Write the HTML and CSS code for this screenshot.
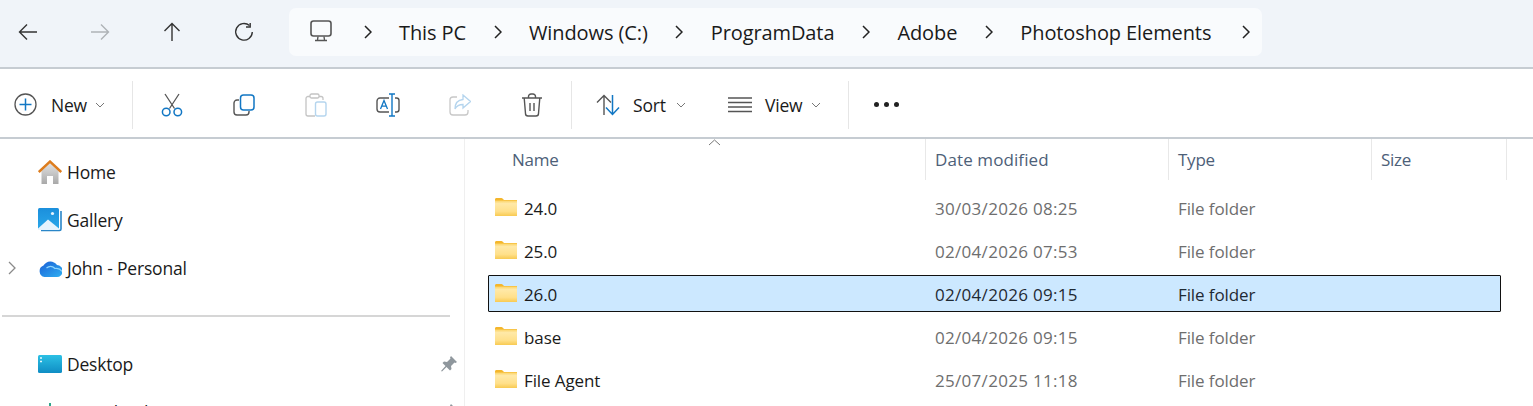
FILE: index.html
```html
<!DOCTYPE html>
<html lang="en">
<head>
    <meta charset="UTF-8">
    <title>Photoshop Elements - File Explorer</title>
    <link rel="stylesheet" href="styles.css">
</head>
<body>
    <svg class="defs" width="0" height="0">
        <defs>
            <linearGradient id="folderFill" x1="0" y1="0" x2="0" y2="1">
                <stop offset="0" stop-color="#fbd365"/>
                <stop offset="0.2" stop-color="#ffe9a8"/>
                <stop offset="0.7" stop-color="#ffe08a"/>
                <stop offset="1" stop-color="#f8ca52"/>
            </linearGradient>
            <linearGradient id="homeBody" x1="0" y1="0" x2="0" y2="1">
                <stop offset="0" stop-color="#e2e2e2"/>
                <stop offset="1" stop-color="#a9a9a9"/>
            </linearGradient>
            <linearGradient id="galleryFill" x1="0" y1="0" x2="0" y2="1">
                <stop offset="0" stop-color="#1b8fdc"/>
                <stop offset="1" stop-color="#2aa8ea"/>
            </linearGradient>
            <linearGradient id="desktopFill" x1="0" y1="0" x2="0" y2="1">
                <stop offset="0" stop-color="#2cc0e4"/>
                <stop offset="1" stop-color="#0f8dc4"/>
            </linearGradient>
            <linearGradient id="cloudFill" x1="0" y1="0" x2="1" y2="1">
                <stop offset="0" stop-color="#1a5fd6"/>
                <stop offset="1" stop-color="#2fb0f2"/>
            </linearGradient>
            <symbol id="folder" viewBox="0 0 22 18">
                <path d="M0 1.5C0 .7.6 0 1.400 0h5c.6 0 1 .2 1.400.7L9 2h13v3H0z" fill="#f4b62c"/>
                <rect y="2.500" width="22" height="15.500" fill="url(#folderFill)"/>
            </symbol>
            <symbol id="chev" viewBox="0 0 8 14">
                <path d="M1 1l6 6-6 6" fill="none" stroke="#222" stroke-width="1.500"/>
            </symbol>
            <symbol id="drop" viewBox="0 0 10 6">
                <path d="M1 1l4 4 4-4" fill="none" stroke="#777" stroke-width="1"/>
            </symbol>
        </defs>
    </svg>

    <!-- address bar -->
    <header class="addressbar">
        <nav class="nav">
            <button class="nav-btn">
                <svg width="20" height="18" viewBox="0 0 20 18"><path d="M19 9H1.500M9 1.500L1.500 9 9 16.500" fill="none" stroke="#333" stroke-width="1.400"/></svg>
            </button>
            <button class="nav-btn">
                <svg width="20" height="18" viewBox="0 0 20 18"><path d="M1 9h17.500M11 1.500L18.500 9 11 16.500" fill="none" stroke="#aeb2b6" stroke-width="1.400"/></svg>
            </button>
            <button class="nav-btn">
                <svg width="18" height="20" viewBox="0 0 18 20"><path d="M9 19V1.500M1.500 9L9 1.500 16.500 9" fill="none" stroke="#333" stroke-width="1.400"/></svg>
            </button>
            <button class="nav-btn">
                <svg width="20" height="20" viewBox="0 0 20 20"><path d="M15.500 3.600A8.300 8.300 0 1 0 18.300 10" fill="none" stroke="#333" stroke-width="1.400"/><path d="M16.200 1v4H12" fill="none" stroke="#333" stroke-width="1.400"/></svg>
            </button>
        </nav>
        <div class="crumbs">
            <svg class="crumb-pc" width="22" height="22" viewBox="0 0 22 22"><rect x="1" y="1" width="20" height="15" rx="2.500" fill="none" stroke="#555" stroke-width="1.600"/><path d="M8 16.500l-.5 3.500M14 16.500l.5 3.500M5 20.500h12" fill="none" stroke="#555" stroke-width="1.400"/></svg>
            <svg class="chev"><use href="#chev"/></svg>
            <span>This PC</span>
            <svg class="chev"><use href="#chev"/></svg>
            <span>Windows (C:)</span>
            <svg class="chev"><use href="#chev"/></svg>
            <span>ProgramData</span>
            <svg class="chev"><use href="#chev"/></svg>
            <span>Adobe</span>
            <svg class="chev"><use href="#chev"/></svg>
            <span>Photoshop Elements</span>
            <svg class="chev chev-last"><use href="#chev"/></svg>
        </div>
    </header>

    <!-- command bar -->
    <div class="toolbar">
        <div class="tool-new">
            <svg width="23" height="23" viewBox="0 0 23 23"><circle cx="11.500" cy="11.500" r="10.500" fill="none" stroke="#555" stroke-width="1.300"/><path d="M11.500 5.500v12M5.500 11.500h12" stroke="#1277c4" stroke-width="1.500"/></svg>
            <span class="tool-label">New</span>
            <svg class="drop"><use href="#drop"/></svg>
        </div>
        <div class="tool-sep"></div>
        <div class="tool-icons">
            <button class="tool-btn">
                <svg width="22" height="24" viewBox="0 0 22 24"><path d="M4 1l9.500 14.500M18 1L8.500 15.500" fill="none" stroke="#555" stroke-width="1.300"/><circle cx="5.200" cy="19" r="3.800" fill="none" stroke="#1277c4" stroke-width="1.500"/><circle cx="16.800" cy="19" r="3.800" fill="none" stroke="#1277c4" stroke-width="1.500"/></svg>
            </button>
            <button class="tool-btn">
                <svg width="22" height="22" viewBox="0 0 22 22"><path d="M6 6H4a3 3 0 0 0-3 3v9a3 3 0 0 0 3 3h9a3 3 0 0 0 3-3v-1" fill="none" stroke="#555" stroke-width="1.400"/><rect x="7.500" y="1" width="13.500" height="15" rx="3" fill="none" stroke="#1277c4" stroke-width="1.500"/></svg>
            </button>
            <button class="tool-btn">
                <svg width="22" height="24" viewBox="0 0 22 24"><path d="M5 3.500H3a2 2 0 0 0-2 2V21a2 2 0 0 0 2 2h7M14 3.500h2a2 2 0 0 1 2 2V7" fill="none" stroke="#c4c4c4" stroke-width="1.300"/><rect x="5" y="1" width="9" height="4" rx="1.500" fill="none" stroke="#c4c4c4" stroke-width="1.300"/><rect x="10.500" y="9" width="10.500" height="14" rx="2" fill="none" stroke="#b5d5ee" stroke-width="1.400"/></svg>
            </button>
            <button class="tool-btn">
                <svg width="24" height="24" viewBox="0 0 24 24"><path d="M13 5H4a3 3 0 0 0-3 3v8a3 3 0 0 0 3 3h9M19 5h1.500A2.500 2.500 0 0 1 23 7.500v9a2.500 2.500 0 0 1-2.500 2.500H19" fill="none" stroke="#555" stroke-width="1.400"/><path d="M16 1v22M13 1h6M13 23h6" fill="none" stroke="#1277c4" stroke-width="1.400"/><path d="M4.500 16L8 7.500 11.500 16M5.700 13.200h4.600" fill="none" stroke="#1277c4" stroke-width="1.300"/></svg>
            </button>
            <button class="tool-btn">
                <svg width="22" height="22" viewBox="0 0 22 22"><path d="M8 3H4a3 3 0 0 0-3 3v12a3 3 0 0 0 3 3h12a3 3 0 0 0 3-3v-2" fill="none" stroke="#c8c8c8" stroke-width="1.300"/><path d="M14 1l7.500 6.500L14 14v-3.500c-4 0-6.500 1.500-8 4.500 0-5.500 3-9 8-9.500z" fill="none" stroke="#b5d5ee" stroke-width="1.300"/></svg>
            </button>
            <button class="tool-btn">
                <svg width="22" height="24" viewBox="0 0 22 24"><path d="M1 5h20M7.500 5V3.500A2.500 2.500 0 0 1 10 1h2a2.500 2.500 0 0 1 2.500 2.500V5M3.200 5l1.300 15.500A2.500 2.500 0 0 0 7 23h8a2.500 2.500 0 0 0 2.500-2.500L18.800 5M9 10v8M13 10v8" fill="none" stroke="#555" stroke-width="1.400"/></svg>
            </button>
        </div>
        <div class="tool-sep"></div>
        <div class="tool-sort">
            <svg width="25" height="22" viewBox="0 0 25 22"><path d="M8 21V2M1 8.500L8 1.500l7 7" fill="none" stroke="#555" stroke-width="1.400"/><path d="M16.500 1v19M10 13.500l6.500 7 6.500-7" fill="none" stroke="#1277c4" stroke-width="1.500"/></svg>
            <span class="tool-label">Sort</span>
            <svg class="drop"><use href="#drop"/></svg>
        </div>
        <div class="tool-view">
            <svg width="24" height="16" viewBox="0 0 24 16"><path d="M0 1h24M0 5.500h24M0 10h24M0 14.500h24" stroke="#555" stroke-width="1.300"/></svg>
            <span class="tool-label">View</span>
            <svg class="drop"><use href="#drop"/></svg>
        </div>
        <div class="tool-sep"></div>
        <div class="tool-more"><i></i><i></i><i></i></div>
    </div>

    <main class="content">
        <!-- navigation pane -->
        <aside class="sidebar">
            <div class="side-row">
                <span class="side-chev"></span>
                <svg class="side-icon" width="24" height="24" viewBox="0 0 24 24"><path d="M3.500 11L12 3l8.500 8v13H15v-8H9v8H3.500z" fill="url(#homeBody)"/><path d="M.8 12L12 1.500 23.200 12" fill="none" stroke="#dd7d1e" stroke-width="2.400"/></svg>
                <span class="side-name">Home</span>
            </div>
            <div class="side-row">
                <span class="side-chev"></span>
                <svg class="side-icon" width="24" height="24" viewBox="0 0 24 24"><path d="M3 22.500h18.500a1.500 1.500 0 0 0 1.500-1.500V3" fill="none" stroke="#2a86c8" stroke-width="1.600"/><rect width="21" height="22" rx="1.500" fill="url(#galleryFill)"/><path d="M0 20.500L10 11.500l11 9v1.500H0z" fill="#e6f3fd"/><circle cx="14.500" cy="5.500" r="1.600" fill="#e6f3fd"/></svg>
                <span class="side-name">Gallery</span>
            </div>
            <div class="side-row">
                <svg class="side-chev-icon" width="8" height="14"><path d="M1 1l6 6-6 6" fill="none" stroke="#8a8a8a" stroke-width="1.300"/></svg>
                <svg class="side-icon" width="24" height="18" viewBox="0 0 24 18"><path d="M6.500 18a6 6 0 0 1-1-11.500A8 8 0 0 1 19 6a6 6 0 0 1-.5 12z" fill="url(#cloudFill)"/><path d="M8.500 9c3-2.500 6-2 8.500 .5 3-.5 5.500 .5 7 3" fill="none" stroke="#8fd6fb" stroke-width="1.200"/></svg>
                <span class="side-name">John - Personal</span>
            </div>
            <hr class="side-divider">
            <div class="side-row">
                <span class="side-chev"></span>
                <svg class="side-icon" width="24" height="18" viewBox="0 0 24 18"><rect width="24" height="18" rx="1.500" fill="url(#desktopFill)"/><path d="M2 3h2M2 6.500h2" stroke="#e6f7fc" stroke-width="1.400"/></svg>
                <span class="side-name">Desktop</span>
                <svg class="side-pin" width="16" height="16" viewBox="0 0 16 16"><path d="M10 0l6 6-1.500 1-1-.5L10 10l.5 3L9 14.500 5.500 11 1 15.500 0 15l4.500-5L1.500 7 3 5.500l3 .5 3.500-3.500L9 1.500z" fill="#8f979d"/></svg>
            </div>
            <div class="side-row">
                <span class="side-chev"></span>
                <svg class="side-icon" width="24" height="24" viewBox="0 0 24 24"><path d="M12 3v12M6 9l6 6 6-6" fill="none" stroke="#2ea58a" stroke-width="2"/></svg>
                <span class="side-name">Downloads</span>
                <svg class="side-pin" width="16" height="16" viewBox="0 0 16 16"><path d="M10 0l6 6-1.500 1-1-.5L10 10l.5 3L9 14.500 5.500 11 1 15.500 0 15l4.500-5L1.500 7 3 5.500l3 .5 3.500-3.500L9 1.500z" fill="#8f979d"/></svg>
            </div>
        </aside>

        <!-- file list -->
        <section class="files">
            <div class="file-head">
                <div class="col-name">Name
                    <svg class="sort-caret" width="13" height="7" viewBox="0 0 13 7"><path d="M1 6l5.500-5L12 6" fill="none" stroke="#777" stroke-width="1"/></svg>
                </div>
                <div class="col-date">Date modified</div>
                <div class="col-type">Type</div>
                <div class="col-size">Size</div>
            </div>
            <div class="file-rows">
                <div class="file-row">
                    <div class="file-name"><svg class="folder"><use href="#folder"/></svg>24.0</div>
                    <div class="file-date">30/03/2026 08:25</div>
                    <div class="file-type">File folder</div>
                </div>
                <div class="file-row">
                    <div class="file-name"><svg class="folder"><use href="#folder"/></svg>25.0</div>
                    <div class="file-date">02/04/2026 07:53</div>
                    <div class="file-type">File folder</div>
                </div>
                <div class="file-row selected">
                    <div class="file-name"><svg class="folder"><use href="#folder"/></svg>26.0</div>
                    <div class="file-date">02/04/2026 09:15</div>
                    <div class="file-type">File folder</div>
                </div>
                <div class="file-row">
                    <div class="file-name"><svg class="folder"><use href="#folder"/></svg>base</div>
                    <div class="file-date">02/04/2026 09:15</div>
                    <div class="file-type">File folder</div>
                </div>
                <div class="file-row">
                    <div class="file-name"><svg class="folder"><use href="#folder"/></svg>File Agent</div>
                    <div class="file-date">25/07/2025 11:18</div>
                    <div class="file-type">File folder</div>
                </div>
            </div>
        </section>
    </main>
</body>
</html>
```

FILE: styles.css
```css
body {
    margin: 0;
    height: 406px;
    overflow: hidden;
    background: #ffffff;
    color: #1a1a1a;
    font-family: "Open Sans", "Noto Sans", sans-serif;
}

.defs {
    display: block;
    height: 0;
}

button {
    border: none;
    background: none;
    padding: 0;
    display: flex;
    justify-content: center;
    align-items: center;
}

/* address bar */
.addressbar {
    height: 67px;
    display: flex;
    background: #f0f4f9;
    border-bottom: 2px solid #c6ccd2;
}

.nav {
    display: flex;
    align-items: center;
    gap: 48px;
    margin-left: 16px;
    height: 63px;
}

.nav-btn {
    width: 24px;
    height: 24px;
}

.crumbs {
    margin: 8px 0 0 33px;
    height: 48px;
    width: 973px;
    box-sizing: border-box;
    padding-left: 21px;
    display: flex;
    align-items: center;
    gap: 27.500px;
    background: #f9fbfd;
    border-radius: 7px;
    font-size: 20px;
    letter-spacing: -0.1px;
}

.crumb-pc {
    margin-right: 4px;
    margin-top: -2px;
}

.chev {
    width: 8px;
    height: 14px;
}

.chev-last {
    margin-left: 3px;
}

/* command bar */
.toolbar {
    height: 65px;
    display: flex;
    align-items: center;
    padding: 3px 0 0 14px;
    border-bottom: 2px solid #c6ccd2;
}

.tool-label {
    font-size: 17.500px;
    letter-spacing: -0.2px;
}

.drop {
    width: 10px;
    height: 6px;
}

.tool-new {
    width: 118px;
    display: flex;
    align-items: center;
}

.tool-new .tool-label {
    margin-left: 14px;
}

.tool-new .drop {
    margin-left: 8px;
}

.tool-sep {
    width: 1px;
    height: 48px;
    background: #e6e6e6;
}

.tool-icons {
    display: flex;
    padding: 0 3px;
}

.tool-btn {
    width: 72px;
    height: 48px;
}

.tool-sort {
    width: 132px;
    display: flex;
    align-items: center;
    margin-left: 24px;
}

.tool-sort .tool-label {
    margin-left: 12px;
}

.tool-sort .drop {
    margin-left: 10px;
}

.tool-view {
    width: 120px;
    display: flex;
    align-items: center;
}

.tool-view .tool-label {
    margin-left: 13px;
}

.tool-view .drop {
    margin-left: 9px;
}

.tool-more {
    display: flex;
    gap: 5px;
    margin-left: 25px;
}

.tool-more i {
    width: 5px;
    height: 5px;
    border-radius: 50%;
    background: #222;
}

/* main area */
.content {
    display: flex;
    height: 267px;
    overflow: hidden;
}

.sidebar {
    width: 464px;
    flex: none;
    padding-top: 9px;
    border-right: 1px solid #efefef;
}

.side-row {
    height: 48px;
    display: flex;
    align-items: center;
    padding-left: 8px;
    font-size: 17.500px;
    letter-spacing: -0.2px;
}

.side-chev,
.side-chev-icon {
    width: 8px;
    height: 14px;
    flex: none;
}

.side-icon {
    margin-left: 22px;
    flex: none;
}

.side-name {
    margin-left: 5px;
}

.side-pin {
    margin-left: auto;
    margin-right: 7px;
}

.side-divider {
    border: none;
    height: 2px;
    background: #d6d6d6;
    margin: 23px 14px 23px 2px;
}

/* file list */
.files {
    flex: 1;
    font-size: 17px;
    letter-spacing: -0.25px;
}

.file-head {
    display: grid;
    grid-template-columns: 461px 243px 203px 135px;
    height: 41px;
    color: #4d6078;
}

.file-head > div {
    display: flex;
    align-items: center;
    border-right: 1px solid #e8e8e8;
    padding-left: 9px;
}

.file-head .col-name {
    position: relative;
    padding-left: 47px;
}

.file-head .col-date {
    letter-spacing: 0.1px;
}

.sort-caret {
    position: absolute;
    left: 243px;
    top: 0;
}

.file-rows {
    margin: 9px 0 0 23px;
    width: 1013px;
    display: flex;
    flex-direction: column;
    gap: 6px;
}

.file-row {
    display: grid;
    grid-template-columns: 446px 243px 1fr;
    align-items: center;
    height: 37px;
    box-sizing: border-box;
    border: 1px solid transparent;
    padding-top: 2px;
    color: #6e6e6e;
}

.file-name {
    display: flex;
    align-items: center;
    padding-left: 6px;
    letter-spacing: -0.1px;
    color: #1a1a1a;
}

.file-date {
    letter-spacing: 0.3px;
}

.file-type {
    letter-spacing: -0.1px;
}

.folder {
    width: 22px;
    height: 18px;
    margin-right: 7px;
    margin-top: -4px;
}

.selected {
    background: #cce8ff;
    border: 1px solid #111;
    border-radius: 1px;
    color: #1f2a33;
}
```
